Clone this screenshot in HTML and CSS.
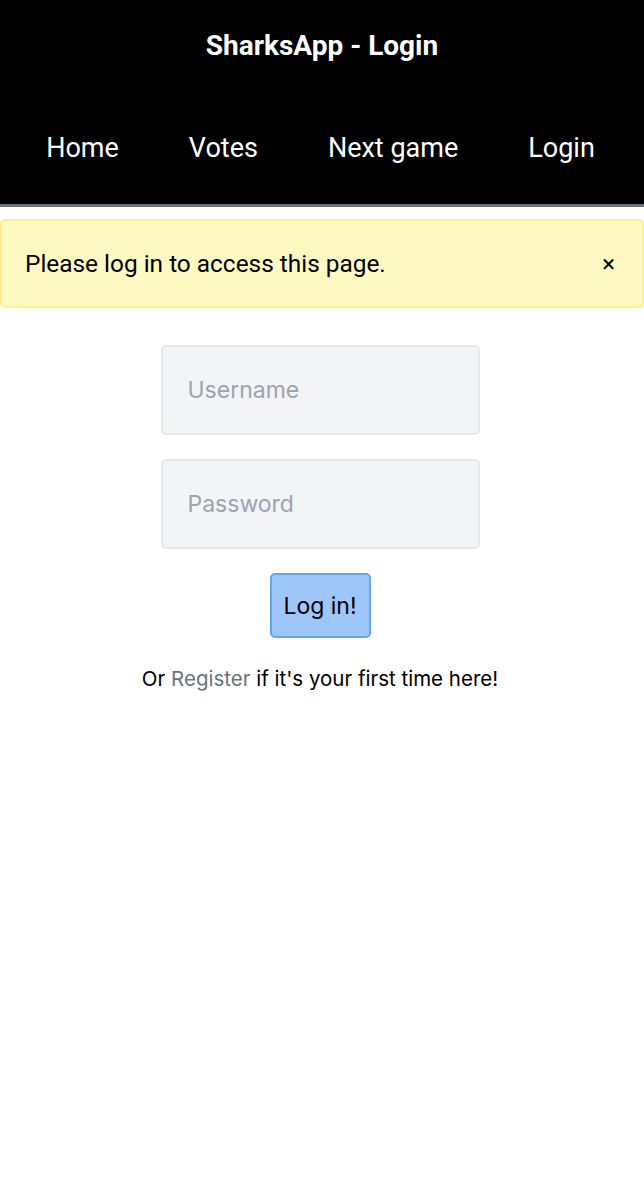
FILE: index.html
```html
<!DOCTYPE html>
<html lang="en">
<head>
<meta charset="utf-8">
<title>SharksApp - Login</title>
<link rel="stylesheet" href="styles.css">
</head>
<body>
<header class="header">
  <h1 class="title">SharksApp - Login</h1>
  <nav class="nav">
    <a class="nav-link" href="#">Home</a>
    <a class="nav-link" href="#">Votes</a>
    <a class="nav-link" href="#">Next game</a>
    <a class="nav-link" href="#">Login</a>
  </nav>
</header>
<main class="main">
  <div class="alert">
    <span class="alert-text">Please log in to access this page.</span>
    <button class="alert-close" type="button">×</button>
  </div>
  <form class="form">
    <input class="field" type="text" placeholder="Username">
    <input class="field" type="password" placeholder="Password">
    <button class="submit" type="button">Log in!</button>
    <p class="note">Or <a class="note-link" href="#">Register</a> if it's your first time here!</p>
  </form>
</main>
</body>
</html>
```
FILE: styles.css
```css
* { box-sizing: border-box; }
html, body { margin: 0; padding: 0; background: #fff; }
body { font-family: Roboto, "Liberation Sans", sans-serif; color: #000; }

.header {
  background: #000;
  border-bottom: 3px solid #6b7280;
}
.title {
  margin: 0;
  height: 90px;
  display: flex;
  align-items: center;
  justify-content: center;
  color: #fff;
  font-size: 28px;
  font-weight: 700;
}
.nav {
  height: 114px;
  display: flex;
  align-items: center;
  justify-content: center;
  gap: 70px;
  padding-top: 2px;
  padding-right: 3px;
}
.nav-link {
  color: #fff;
  text-decoration: none;
  font-size: 27px;
}

.main { padding-top: 12px; }

.alert {
  height: 89px;
  background: #fef9c3;
  border: 2px solid #fef08a;
  border-radius: 5px;
  display: flex;
  align-items: center;
  justify-content: space-between;
  padding: 0 27px 0 23px;
}
.alert-text { font-size: 24.4px; }
.alert-close {
  border: 0;
  background: transparent;
  font-family: Roboto, "Liberation Sans", sans-serif;
  font-size: 24px;
  padding: 0;
  color: #000;
}

.form {
  display: flex;
  flex-direction: column;
  align-items: center;
  padding-top: 37px;
  padding-right: 4px;
  font-family: Inter, "Open Sans", sans-serif;
}
.field {
  width: 319px;
  height: 90px;
  background: #f3f4f6;
  border: 2px solid #e5e7eb;
  border-radius: 5px;
  padding: 0 25px;
  font-family: Inter, "Open Sans", sans-serif;
  font-size: 23px;
  color: #111;
  margin-bottom: 24px;
}
.field::placeholder { color: #9ca3af; }
.submit {
  width: 101px;
  height: 65px;
  background: #9fc6f9;
  border: 2px solid #60a5fa;
  border-radius: 5px;
  font-family: Inter, "Open Sans", sans-serif;
  font-size: 23px;
  color: #000;
  padding: 0;
}
.note {
  margin: 28px 0 0;
  font-size: 20.5px;
}
.note-link {
  color: #6b7280;
  text-decoration: none;
}
```
